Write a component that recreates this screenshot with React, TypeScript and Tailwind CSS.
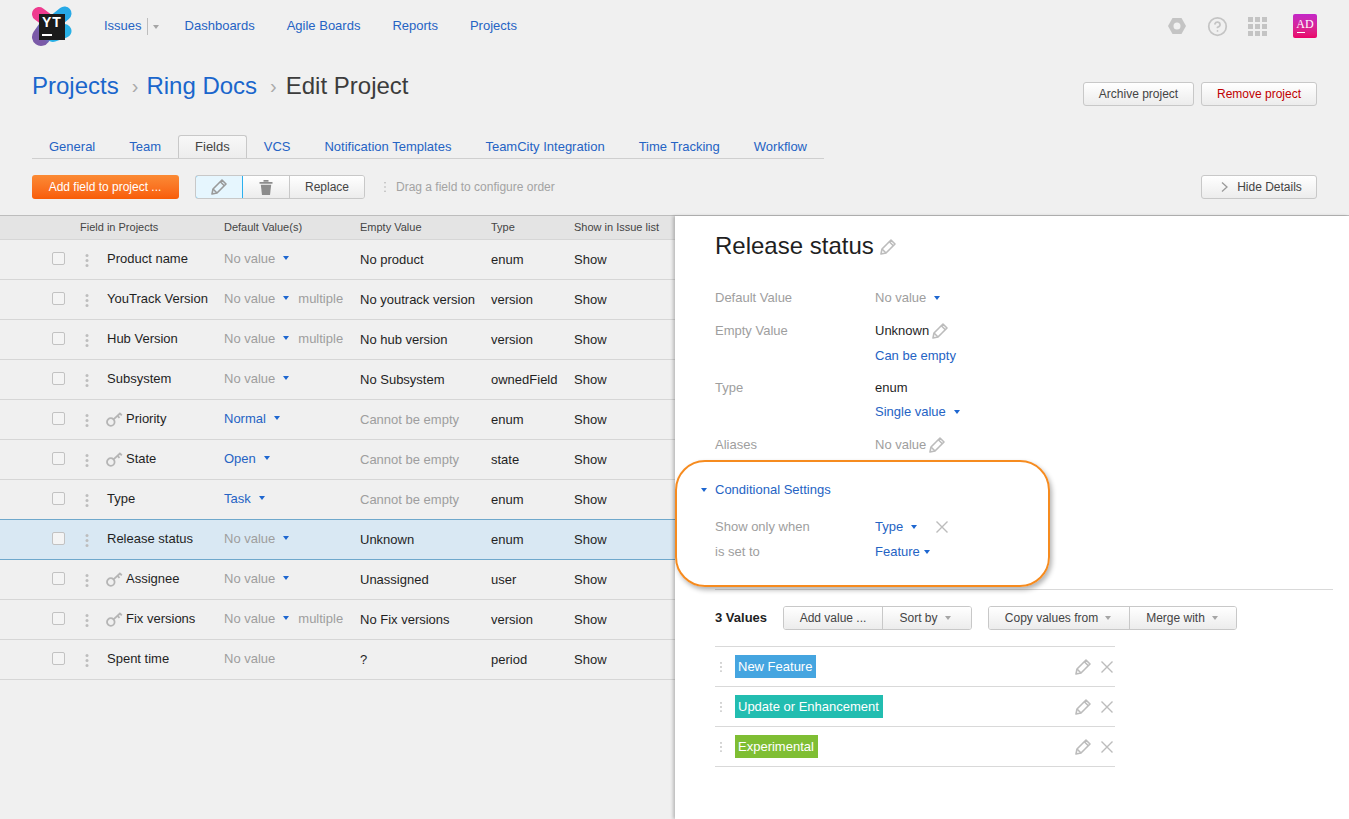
import { CircleHelp } from "lucide-react";

const LINK = "text-[#2563c4]";

function Pencil({ className = "" }: { className?: string }) {
  return (
    <svg viewBox="0 0 16 16" width="16" height="16" className={className} fill="none" stroke="currentColor" strokeWidth="1.6" strokeLinejoin="round">
      <path d="M1 15l1-5L11 1l4 4-9 9z" />
      <path d="M2 10l4 4" />
      <path d="M9.300 2.800l4 4" />
    </svg>
  );
}

function Cross({ size = 12 }: { size?: number }) {
  return (
    <svg viewBox="0 0 12 12" width={size} height={size} fill="none" stroke="#bcbcbc" strokeWidth="1.4">
      <path d="M0.500 0.500l11 11M11.500 0.500l-11 11" />
    </svg>
  );
}

function Key() {
  return (
    <svg viewBox="0 0 17 15" width="17" height="15" fill="none" stroke="#b5b5b5" strokeWidth="1.800">
      <circle cx="4.800" cy="10" r="3.800" />
      <path d="M7.500 7.300L14.500 1" />
      <path d="M11.500 3.800l2 2M14 1.500l1.800 1.800" />
    </svg>
  );
}

function Dots({ height = 13, color = "#bdbdbd", r = 1.5 }: { height?: number; color?: string; r?: number }) {
  return (
    <svg viewBox={`0 0 4 ${height}`} width="4" height={height}>
      <circle cx="2" cy={r} r={r} fill={color} />
      <circle cx="2" cy={height / 2} r={r} fill={color} />
      <circle cx="2" cy={height - r} r={r} fill={color} />
    </svg>
  );
}

function Caret({ gray = false }: { gray?: boolean }) {
  return (
    <svg viewBox="0 0 6 4" width="6" height="4" className="shrink-0">
      <path d="M0 0h6L3 4z" fill={gray ? "#a5a5a5" : "#1d66d0"} />
    </svg>
  );
}

function Logo() {
  return (
    <div className="relative w-[41px] h-[41px]">
      <svg viewBox="0 0 41 41" width="41" height="41" className="absolute inset-0">
        <defs>
          <linearGradient id="pur" x1="0" y1="1" x2="1" y2="0">
            <stop offset="0" stopColor="#7b5aa8" />
            <stop offset="1" stopColor="#4f86d8" />
          </linearGradient>
        </defs>
        <path d="M8 8L20 17" stroke="#ee3b8e" strokeWidth="14" strokeLinecap="round" />
        <path d="M33.500 7.500L18 20" stroke="#27a9e6" strokeWidth="14" strokeLinecap="round" />
        <path d="M33.500 25L22 29" stroke="#27b0e6" strokeWidth="14" strokeLinecap="round" />
        <path d="M10 31L17 21" stroke="url(#pur)" strokeWidth="18" strokeLinecap="round" />
        <path d="M10 34L24 34" stroke="url(#pur)" strokeWidth="13" strokeLinecap="round" />
      </svg>
      <div className="absolute left-[8px] top-[8px] w-[26px] h-[26px] bg-[#1b1b1b] flex flex-col pl-[3px]">
        <span className="text-white text-[14px] leading-[15px] font-bold tracking-[1px] mt-[1px]">YT</span>
        <span className="block w-[10px] h-[2px] bg-white mt-[4px]" />
      </div>
    </div>
  );
}

function Btn({ children, className = "" }: { children: React.ReactNode; className?: string }) {
  return (
    <div className={`h-[24px] flex items-center justify-center gap-[8px] text-[12px] text-[#444] border border-[#c8c8c8] rounded-[3px] bg-gradient-to-b from-[#ffffff] to-[#ececec] ${className}`}>
      {children}
    </div>
  );
}

function GroupBtn({ children, className = "" }: { children: React.ReactNode; className?: string }) {
  return (
    <div className={`h-full flex items-center justify-center gap-[7px] bg-gradient-to-b from-[#ffffff] to-[#ececec] ${className}`}>
      {children}
    </div>
  );
}

const tabs = ["General", "Team", "Fields", "VCS", "Notification Templates", "TeamCity Integration", "Time Tracking", "Workflow"];

type Row = {
  name: string;
  key?: boolean;
  def: string;
  defLink?: boolean;
  caret?: boolean;
  multiple?: boolean;
  empty: string;
  emptyGray?: boolean;
  type: string;
  selected?: boolean;
};

const rows: Row[] = [
  { name: "Product name", def: "No value", caret: true, empty: "No product", type: "enum" },
  { name: "YouTrack Version", def: "No value", caret: true, multiple: true, empty: "No youtrack version", type: "version" },
  { name: "Hub Version", def: "No value", caret: true, multiple: true, empty: "No hub version", type: "version" },
  { name: "Subsystem", def: "No value", caret: true, empty: "No Subsystem", type: "ownedField" },
  { name: "Priority", key: true, def: "Normal", defLink: true, caret: true, empty: "Cannot be empty", emptyGray: true, type: "enum" },
  { name: "State", key: true, def: "Open", defLink: true, caret: true, empty: "Cannot be empty", emptyGray: true, type: "state" },
  { name: "Type", def: "Task", defLink: true, caret: true, empty: "Cannot be empty", emptyGray: true, type: "enum" },
  { name: "Release status", def: "No value", caret: true, empty: "Unknown", type: "enum", selected: true },
  { name: "Assignee", key: true, def: "No value", caret: true, empty: "Unassigned", type: "user" },
  { name: "Fix versions", key: true, def: "No value", caret: true, multiple: true, empty: "No Fix versions", type: "version" },
  { name: "Spent time", def: "No value", empty: "?", type: "period" },
];

const COLS = "grid grid-cols-[80px_144px_136px_131px_83px_1fr] items-center";

function TableRow({ r }: { r: Row }) {
  return (
    <div className={`${COLS} h-[40px] border-b text-[13px] text-[#1f1f1f] ${r.selected ? "bg-[#d9e8f3] border-[#6fa8cc] border-t h-[41px] -mt-[1px]" : "border-[#d6d6d6]"}`}>
      <div className="pl-[52px] flex items-center">
        <span className="w-[13px] h-[13px] border border-[#c2c2c2] rounded-[2px] bg-[#f4f4f4] -mt-[2px]" />
      </div>
      <div className="flex items-center pl-[5px] -mt-[2px]">
        <span className="w-[22px] shrink-0 mt-[3px]"><Dots /></span>
        {r.key ? (
          <span className="flex items-center gap-[3px] -ml-[1px]">
            <span className="mt-[2px]"><Key /></span>
            {r.name}
          </span>
        ) : (
          r.name
        )}
      </div>
      <div className="flex items-center -mt-[2px] whitespace-nowrap">
        <span className={r.defLink ? LINK : "text-[#9e9e9e]"}>{r.def}</span>
        {r.caret && <span className="ml-[8px] -mt-[2px]"><Caret /></span>}
        {r.multiple && <span className="ml-[9px] text-[#9e9e9e]">multiple</span>}
      </div>
      <div className={r.emptyGray ? "text-[#9e9e9e]" : ""}>{r.empty}</div>
      <div>{r.type}</div>
      <div>Show</div>
    </div>
  );
}

function Field({ label, children, className = "" }: { label?: string; children: React.ReactNode; className?: string }) {
  return (
    <div className={`grid grid-cols-[160px_1fr] h-[20px] items-center text-[13px] leading-[20px] ${className}`}>
      <div className="text-[#9e9e9e]">{label}</div>
      <div className="flex items-center whitespace-nowrap">{children}</div>
    </div>
  );
}

const values = [
  { t: "New Feature", c: "bg-[#45a5e0]" },
  { t: "Update or Enhancement", c: "bg-[#22bdb0]" },
  { t: "Experimental", c: "bg-[#7fbe33]" },
];

export default function App() {
  return (
    <div className="relative w-[1349px] h-[819px] overflow-hidden bg-[#f0f0f0] font-['Liberation_Sans',Arial,sans-serif] flex flex-col">
      {/* header */}
      <header className="h-[52px] shrink-0 flex items-center pl-[31px] pr-[32px] text-[13px]">
        <Logo />
        <nav className={`ml-[32px] flex items-center ${LINK}`}>
          <span>Issues</span>
          <span className="ml-[5px] w-px h-[17px] bg-[#bdbdbd]" />
          <span className="ml-[5px] mt-[1px] mr-[26px]"><Caret gray /></span>
          <span className="mr-[32px]">Dashboards</span>
          <span className="mr-[32px]">Agile Boards</span>
          <span className="mr-[32px]">Reports</span>
          <span>Projects</span>
        </nav>
        <div className="ml-auto flex items-center">
          <svg viewBox="0 0 18 16" width="18" height="16" className="mr-[23px]">
            <path fillRule="evenodd" d="M4.500 0h9L18 8l-4.500 8h-9L0 8zM9 4.500a3.500 3.500 0 100 7 3.500 3.500 0 000-7z" fill="#c4c4c4" />
          </svg>
          <CircleHelp size={21} strokeWidth={2} color="#c4c4c4" className="mr-[21px] -ml-[2px]" />
          <div className="grid grid-cols-3 gap-[2px] mr-[26px] -ml-[1px]">
            {Array.from({ length: 9 }).map((_, i) => (
              <span key={i} className="w-[5px] h-[5px] bg-[#c4c4c4]" />
            ))}
          </div>
          <div className="w-[24px] h-[24px] rounded-[2px] bg-gradient-to-b from-[#c426c8] to-[#ea0068] text-white flex flex-col items-center font-['Liberation_Serif',serif] text-[12px] leading-[14px] pt-[3px]">
            <span>AD</span>
            <span className="w-[8px] h-px bg-white self-start ml-[4px] mt-[1px]" />
          </div>
        </div>
      </header>

      {/* title */}
      <div className="h-[83px] shrink-0 px-[32px] flex justify-between items-start">
        <h1 className="mt-[19px] text-[24px] leading-[30px] flex items-center">
          <span className="text-[#1a66cc]">Projects</span>
          <span className="text-[#aaa] text-[20px] ml-[13px] mr-[8px]">›</span>
          <span className="text-[#1a66cc]">Ring Docs</span>
          <span className="text-[#aaa] text-[20px] ml-[13px] mr-[9px]">›</span>
          <span className="text-[#3c3c3c]">Edit Project</span>
        </h1>
        <div className="mt-[30px] flex gap-[7px]">
          <Btn className="w-[111px]">Archive project</Btn>
          <Btn className="w-[116px] text-[#c00000]">Remove project</Btn>
        </div>
      </div>

      {/* tabs */}
      <div className="pl-[32px] h-[24px] shrink-0 flex">
        <div className="flex border-b border-[#cfcfcf] text-[13px] h-[24px]">
          {tabs.map((t) =>
            t === "Fields" ? (
              <div key={t} className="px-[16px] flex items-center text-[#444] border border-b-0 border-[#c8c8c8] rounded-t-[3px] bg-gradient-to-b from-[#f8f8f8] to-[#ededed]">
                {t}
              </div>
            ) : (
              <div key={t} className={`px-[17px] flex items-center ${LINK}`}>
                {t}
              </div>
            ),
          )}
        </div>
      </div>

      {/* toolbar */}
      <div className="mt-[16px] h-[24px] shrink-0 pl-[32px] pr-[32px] flex items-center">
        <div className="w-[147px] h-[24px] rounded-[3px] bg-gradient-to-b from-[#fb8a34] to-[#f85c06] text-white text-[12px] flex items-center justify-center pr-[1px]">
          Add field to project ...
        </div>
        <div className="ml-[16px] w-[170px] h-[24px] flex rounded-[3px] border border-[#c8c8c8] overflow-hidden text-[12px] text-[#444]">
          <div className="w-[48px] h-[24px] flex items-center justify-center bg-[#e6f6fe] border border-[#2bb0ee] rounded-l-[3px] -m-px mr-0 text-[#9a9a9a] shrink-0">
            <Pencil />
          </div>
          <GroupBtn className="w-[47px] border-r border-[#c8c8c8]">
            <svg viewBox="0 0 14 16" width="14" height="16">
              <path d="M0.500 3h13v1.700H0.500zM4.500 1h5v1.700h-5z" fill="#8c8c8c" />
              <path d="M1.800 5.700h10.400L11 16H3z" fill="#8c8c8c" />
            </svg>
          </GroupBtn>
          <GroupBtn className="flex-1">Replace</GroupBtn>
        </div>
        <div className="ml-[18px] flex items-center gap-[9px] text-[12px] text-[#a3a3a3]">
          <Dots height={10} r={0.8} color="#b0b0b0" />
          Drag a field to configure order
        </div>
        <Btn className="ml-auto w-[116px] pl-[5px] gap-[9px]">
          <svg viewBox="0 0 7 10" width="7" height="10" fill="none" stroke="#9a9a9a" strokeWidth="1.300">
            <path d="M1 0.500L6 5 1 9.500" />
          </svg>
          Hide Details
        </Btn>
      </div>

      {/* main */}
      <div className="mt-[16px] flex-1 flex border-t border-[#bdbdbd] min-h-0">
        <div className="w-[675px] shrink-0">
          <div className={`${COLS} h-[24px] bg-[#e4e4e4] border-b border-[#d6d6d6] text-[11px] text-[#444]`}>
            <div />
            <div>Field in Projects</div>
            <div>Default Value(s)</div>
            <div>Empty Value</div>
            <div>Type</div>
            <div>Show in Issue list</div>
          </div>
          {rows.map((r) => (
            <TableRow key={r.name} r={r} />
          ))}
        </div>

        <div className="flex-1 bg-white shadow-[-2px_0_3px_rgba(0,0,0,0.22)] pl-[40px] pr-[16px] pt-[15px]">
          <div className="flex items-center h-[30px] text-[24px] text-[#1f1f1f]">
            Release status
            <Pencil className="ml-[6px] mt-[2px] text-[#bcbcbc]" />
          </div>
          <Field label="Default Value" className="mt-[27px]">
            <span className="text-[#9e9e9e]">No value</span>
            <span className="ml-[8px]"><Caret /></span>
          </Field>
          <Field label="Empty Value" className="mt-[13px]">
            <span className="text-[#1f1f1f]">Unknown</span>
            <Pencil className="ml-[3px] text-[#bcbcbc]" />
          </Field>
          <Field className="mt-[5px]">
            <span className={LINK}>Can be empty</span>
          </Field>
          <Field label="Type" className="mt-[12px]">
            <span className="text-[#1f1f1f]">enum</span>
          </Field>
          <Field className="mt-[4px]">
            <span className={LINK}>Single value</span>
            <span className="ml-[8px]"><Caret /></span>
          </Field>
          <Field label="Aliases" className="mt-[13px]">
            <span className="text-[#9e9e9e]">No value</span>
            <Pencil className="ml-[3px] text-[#bcbcbc]" />
          </Field>
          <div className={`mt-[25px] -ml-[14px] h-[20px] flex items-center gap-[8px] text-[13px] ${LINK}`}>
            <Caret />
            Conditional Settings
          </div>
          <Field label="Show only when" className="mt-[17px]">
            <span className={LINK}>Type</span>
            <span className="ml-[8px]"><Caret /></span>
            <span className="ml-[19px]"><Cross /></span>
          </Field>
          <Field label="is set to" className="mt-[5px]">
            <span className={LINK}>Feature</span>
            <span className="ml-[4px]"><Caret /></span>
          </Field>

          <div className="mt-[27px] h-px bg-[#d9d9d9]" />

          <div className="mt-[16px] h-[24px] flex items-center">
            <span className="w-[68px] text-[13px] font-bold text-[#1f1f1f] whitespace-nowrap">3 Values</span>
            <div className="w-[189px] h-[24px] flex border border-[#c8c8c8] rounded-[3px] overflow-hidden text-[12px] text-[#444]">
              <GroupBtn className="w-[99px] border-r border-[#c8c8c8]">Add value ...</GroupBtn>
              <GroupBtn className="flex-1 pr-[4px]">Sort by <Caret gray /></GroupBtn>
            </div>
            <div className="ml-[16px] w-[249px] h-[24px] flex border border-[#c8c8c8] rounded-[3px] overflow-hidden text-[12px] text-[#444]">
              <GroupBtn className="w-[141px] border-r border-[#c8c8c8] pr-[2px]">Copy values from <Caret gray /></GroupBtn>
              <GroupBtn className="flex-1 pr-[2px]">Merge with <Caret gray /></GroupBtn>
            </div>
          </div>

          <div className="mt-[16px] w-[400px] border-t border-[#d9d9d9]">
            {values.map((v) => (
              <div key={v.t} className="h-[40px] border-b border-[#d9d9d9] flex items-center pl-[4px] pr-[2px]">
                <Dots height={10} r={0.9} color="#c0c0c0" />
                <span className={`ml-[12px] pl-[3px] pr-[4px] h-[23px] leading-[23px] text-[13px] text-white -mt-px ${v.c}`}>{v.t}</span>
                <Pencil className="ml-auto text-[#bcbcbc]" />
                <span className="ml-[10px] flex"><Cross /></span>
              </div>
            ))}
          </div>
        </div>
      </div>

      {/* annotation */}
      <div className="absolute left-[675px] top-[460px] w-[375px] h-[127px] rounded-[30px] border-2 border-[#f68b1f] shadow-[2px_3px_5px_rgba(0,0,0,0.3)] pointer-events-none" />
    </div>
  );
}
